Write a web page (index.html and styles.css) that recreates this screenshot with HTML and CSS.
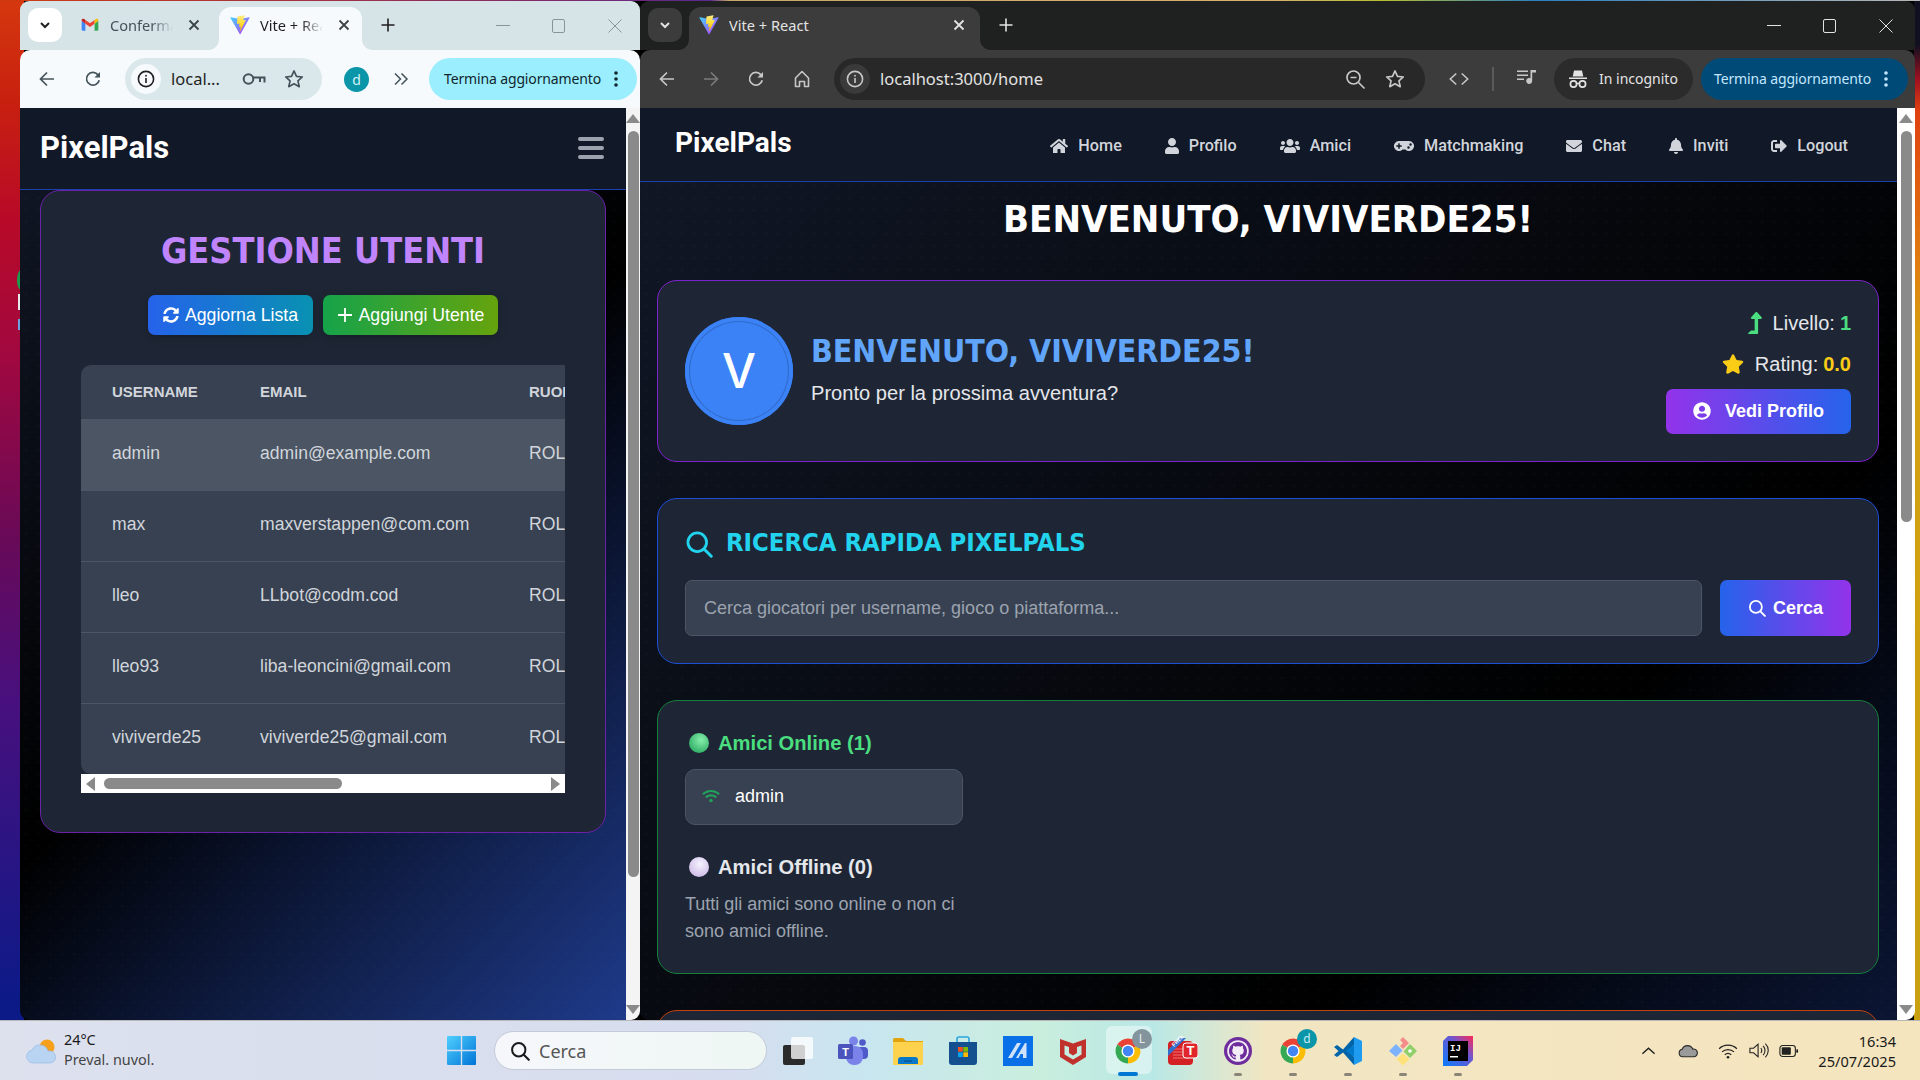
FILE: index.html
```html
<!DOCTYPE html>
<html lang="it">
<head>
<meta charset="utf-8">
<title>PixelPals</title>
<link rel="stylesheet" href="styles.css">
</head>
<body>
<svg class="sprite" aria-hidden="true">
  <defs>
    <linearGradient id="viteA" x1="0" y1="0" x2="1" y2="1"><stop offset="0" stop-color="#41d1ff"/><stop offset="1" stop-color="#bd34fe"/></linearGradient>
    <linearGradient id="viteB" x1="0" y1="0" x2="0" y2="1"><stop offset="0" stop-color="#ffea83"/><stop offset=".5" stop-color="#ffdd35"/><stop offset="1" stop-color="#ffa800"/></linearGradient>
    <linearGradient id="winG" x1="0" y1="0" x2="1" y2="1"><stop offset="0" stop-color="#4fd0ff"/><stop offset="1" stop-color="#0073d6"/></linearGradient>
    <linearGradient id="ijG" x1="0" y1="1" x2="1" y2="0"><stop offset="0" stop-color="#087cfa"/><stop offset=".6" stop-color="#6b57d2"/><stop offset="1" stop-color="#fe2857"/></linearGradient>
    <symbol id="vite" viewBox="0 0 410 404"><path fill="url(#viteA)" d="M399.641 59.5246L215.643 388.545C211.844 395.338 202.084 395.378 198.228 388.618L10.5817 59.5563C6.38087 52.1896 12.6802 43.2665 21.0281 44.7586L205.223 77.6824C206.398 77.8924 207.601 77.8904 208.776 77.6763L389.119 44.8058C397.439 43.2894 403.768 52.1434 399.641 59.5246Z"/><path fill="url(#viteB)" d="M292.965 1.5744L156.801 28.2552C154.563 28.6937 152.906 30.5903 152.771 32.8664L144.395 174.33C144.198 177.662 147.258 180.248 150.51 179.498L188.42 170.749C191.967 169.931 195.172 173.055 194.443 176.622L183.18 231.775C182.422 235.487 185.907 238.661 189.532 237.56L212.947 230.446C216.577 229.344 220.065 232.527 219.297 236.242L201.398 322.875C200.278 328.294 207.486 331.249 210.492 326.603L212.5 323.5L323.454 102.072C325.312 98.3645 322.108 94.137 318.036 94.9228L279.014 102.454C275.347 103.161 272.227 99.746 273.262 96.1583L298.731 7.86689C299.767 4.27314 296.636 0.855181 292.965 1.5744Z"/></symbol>
    <symbol id="chrome" viewBox="0 0 48 48"><path fill="#ea4335" d="M24 24L6.7 14A20 20 0 0 1 41.3 14Z"/><path fill="#fbbc04" d="M24 24L41.3 14A20 20 0 0 1 24 44Z"/><path fill="#34a853" d="M24 24L24 44A20 20 0 0 1 6.7 14Z"/><circle cx="24" cy="24" r="10.5" fill="#fff"/><circle cx="24" cy="24" r="8.3" fill="#4285f4"/></symbol>
    <symbol id="info" viewBox="0 0 20 20"><circle cx="10" cy="10" r="7.6" fill="none" stroke="currentColor" stroke-width="1.6"/><rect x="9.2" y="9" width="1.6" height="5" fill="currentColor"/><rect x="9.2" y="5.9" width="1.6" height="1.7" fill="currentColor"/></symbol>
    <symbol id="star-o" viewBox="0 0 24 24"><path fill="none" stroke="currentColor" stroke-width="1.8" stroke-linejoin="round" d="M12 3.2l2.7 5.9 6.4.7-4.8 4.3 1.4 6.3-5.7-3.2-5.7 3.2 1.4-6.3-4.8-4.3 6.4-.7z"/></symbol>
    <symbol id="back" viewBox="0 0 20 20"><path fill="none" stroke="currentColor" stroke-width="1.7" d="M17 10H4M10 3.5L3.5 10l6.5 6.5"/></symbol>
    <symbol id="fwd" viewBox="0 0 20 20"><path fill="none" stroke="currentColor" stroke-width="1.7" d="M3 10h13M10 3.5l6.5 6.5-6.5 6.5"/></symbol>
    <symbol id="reload" viewBox="0 0 20 20"><path fill="none" stroke="currentColor" stroke-width="1.7" d="M16.2 11.2A6.4 6.4 0 1 1 14.8 5.6L16.4 7.4"/><path fill="currentColor" d="M17 3v5.6h-5.6z"/></symbol>
    <symbol id="dots" viewBox="0 0 6 20"><circle cx="3" cy="4" r="1.8" fill="currentColor"/><circle cx="3" cy="10" r="1.8" fill="currentColor"/><circle cx="3" cy="16" r="1.8" fill="currentColor"/></symbol>
    <symbol id="x" viewBox="0 0 14 14"><path stroke="currentColor" stroke-width="1.8" d="M2.5 2.5l9 9M11.5 2.5l-9 9"/></symbol>
    <symbol id="plus" viewBox="0 0 16 16"><path stroke="currentColor" stroke-width="1.6" d="M8 1.5v13M1.5 8h13"/></symbol>
    <symbol id="chev" viewBox="0 0 14 14"><path fill="none" stroke="currentColor" stroke-width="2" d="M3 5l4 4 4-4"/></symbol>
    <symbol id="mag" viewBox="0 0 24 24"><circle cx="10.5" cy="10.5" r="8" fill="none" stroke="currentColor" stroke-width="2.4"/><path stroke="currentColor" stroke-width="2.6" stroke-linecap="round" d="M16.5 16.5l6 6"/></symbol>
    <symbol id="tr-wifi" viewBox="0 0 22 18"><path fill="none" stroke="currentColor" stroke-width="1.4" d="M1 6.500a14.500 14.500 0 0 1 20 0M4.200 10a10 10 0 0 1 13.600 0M7.400 13.300a5.400 5.400 0 0 1 7.200 0"/><circle cx="11" cy="16" r="1.500" fill="currentColor"/></symbol>
    <symbol id="fa-home" viewBox="0 0 576 512"><path fill="currentColor" d="M280.37 148.26L96 300.11V464a16 16 0 0 0 16 16l112.06-.29a16 16 0 0 0 15.92-16V368a16 16 0 0 1 16-16h64a16 16 0 0 1 16 16v95.64a16 16 0 0 0 16 16.05L464 480a16 16 0 0 0 16-16V300L295.67 148.26a12.19 12.19 0 0 0-15.3 0zM571.6 251.47L488 182.56V44.05a12 12 0 0 0-12-12h-56a12 12 0 0 0-12 12v72.61L318.47 43a48 48 0 0 0-61 0L4.34 251.47a12 12 0 0 0-1.6 16.9l25.5 31A12 12 0 0 0 45.15 301l235.22-193.74a12.19 12.19 0 0 1 15.3 0L530.9 301a12 12 0 0 0 16.9-1.6l25.5-31a12 12 0 0 0-1.7-16.93z"/></symbol>
    <symbol id="fa-user" viewBox="0 0 448 512"><path fill="currentColor" d="M224 256c70.7 0 128-57.3 128-128S294.7 0 224 0 96 57.3 96 128s57.3 128 128 128zm89.6 32h-16.7c-22.2 10.2-46.9 16-72.9 16s-50.6-5.8-72.9-16h-16.7C60.2 288 0 348.2 0 422.4V464c0 26.5 21.5 48 48 48h352c26.5 0 48-21.5 48-48v-41.6c0-74.2-60.2-134.4-134.4-134.4z"/></symbol>
    <symbol id="fa-users" viewBox="0 0 640 512"><path fill="currentColor" d="M96 224c35.3 0 64-28.7 64-64s-28.7-64-64-64-64 28.7-64 64 28.7 64 64 64zm448 0c35.3 0 64-28.7 64-64s-28.7-64-64-64-64 28.7-64 64 28.7 64 64 64zm32 32h-64c-17.6 0-33.5 7.1-45.1 18.6 40.3 22.1 68.9 62 75.1 109.4h66c17.7 0 32-14.3 32-32v-32c0-35.3-28.7-64-64-64zm-256 0c61.9 0 112-50.1 112-112S381.9 32 320 32 208 82.1 208 144s50.1 112 112 112zm76.8 32h-8.3c-20.8 10-43.9 16-68.5 16s-47.6-6-68.5-16h-8.3C179.6 288 128 339.6 128 403.2V432c0 26.5 21.5 48 48 48h288c26.5 0 48-21.5 48-48v-28.8c0-63.6-51.6-115.2-115.2-115.2zm-223.7-13.4C161.5 263.1 145.6 256 128 256H64c-35.3 0-64 28.7-64 64v32c0 17.7 14.3 32 32 32h65.9c6.3-47.4 34.9-87.3 75.2-109.4z"/></symbol>
    <symbol id="fa-game" viewBox="0 0 640 512"><path fill="currentColor" d="M480.07 96H160a160 160 0 1 0 114.24 272h91.52A160 160 0 1 0 480.07 96zM248 268a12 12 0 0 1-12 12h-52v52a12 12 0 0 1-12 12h-24a12 12 0 0 1-12-12v-52H84a12 12 0 0 1-12-12v-24a12 12 0 0 1 12-12h52v-52a12 12 0 0 1 12-12h24a12 12 0 0 1 12 12v52h52a12 12 0 0 1 12 12zm216 76a40 40 0 1 1 40-40 40 40 0 0 1-40 40zm64-96a40 40 0 1 1 40-40 40 40 0 0 1-40 40z"/></symbol>
    <symbol id="fa-mail" viewBox="0 0 512 512"><path fill="currentColor" d="M502.3 190.8c3.9-3.1 9.7-.2 9.7 4.7V400c0 26.5-21.5 48-48 48H48c-26.5 0-48-21.5-48-48V195.6c0-5 5.7-7.8 9.7-4.7 22.4 17.4 52.1 39.5 154.1 113.6 21.1 15.4 56.7 47.8 92.2 47.6 35.7.3 72-32.8 92.3-47.6 102-74.1 131.6-96.3 154-113.7zM256 320c23.2.4 56.6-29.2 73.4-41.4 132.7-96.3 142.8-104.7 173.4-128.7 5.8-4.5 9.2-11.5 9.2-18.9v-19c0-26.5-21.5-48-48-48H48C21.5 64 0 85.5 0 112v19c0 7.4 3.4 14.3 9.2 18.9 30.6 23.9 40.7 32.4 173.4 128.7 16.8 12.2 50.2 41.8 73.4 41.4z"/></symbol>
    <symbol id="fa-bell" viewBox="0 0 448 512"><path fill="currentColor" d="M224 512c35.32 0 63.97-28.65 63.97-64H160.03c0 35.35 28.65 64 63.97 64zm215.39-149.71c-19.32-20.76-55.47-51.99-55.47-154.29 0-77.7-54.48-139.9-127.94-155.16V32c0-17.67-14.32-32-31.98-32s-31.98 14.33-31.98 32v20.84C118.56 68.1 64.08 130.3 64.08 208c0 102.3-36.15 133.53-55.47 154.29-6 6.45-8.66 14.16-8.61 21.71.11 16.4 12.98 32 32.1 32h383.8c19.12 0 32-15.6 32.1-32 .05-7.55-2.61-15.27-8.61-21.71z"/></symbol>
    <symbol id="fa-out" viewBox="0 0 512 512"><path fill="currentColor" d="M497 273L329 441c-15 15-41 4.5-41-17v-96H152c-13.3 0-24-10.7-24-24v-96c0-13.3 10.7-24 24-24h136V88c0-21.4 25.9-32 41-17l168 168c9.3 9.4 9.3 24.6 0 34zM192 436v-40c0-6.6-5.4-12-12-12H96c-17.7 0-32-14.3-32-32V160c0-17.7 14.3-32 32-32h84c6.6 0 12-5.4 12-12V76c0-6.6-5.4-12-12-12H96c-53 0-96 43-96 96v192c0 53 43 96 96 96h84c6.6 0 12-5.4 12-12z"/></symbol>
    <symbol id="fa-sync" viewBox="0 0 512 512"><path fill="currentColor" d="M370.72 133.28C339.458 104.008 298.888 87.962 255.848 88c-77.458.068-144.328 53.178-162.791 126.85-1.344 5.363-6.122 9.15-11.651 9.15H24.103c-7.498 0-13.194-6.807-11.807-14.176C33.933 94.924 134.813 8 256 8c66.448 0 126.791 26.136 171.315 68.685L463.03 40.97C478.149 25.851 504 36.559 504 57.941V192c0 13.255-10.745 24-24 24H345.941c-21.382 0-32.09-25.851-16.971-40.971l41.75-41.749zM32 296h134.059c21.382 0 32.09 25.851 16.971 40.971l-41.75 41.75c31.262 29.273 71.835 45.319 114.876 45.28 77.418-.07 144.315-53.144 162.787-126.849 1.344-5.363 6.122-9.15 11.651-9.15h57.304c7.498 0 13.194 6.807 11.807 14.176C478.067 417.076 377.187 504 256 504c-66.448 0-126.791-26.136-171.315-68.685L48.97 471.03C33.851 486.149 8 475.441 8 454.059V320c0-13.255 10.745-24 24-24z"/></symbol>
    <symbol id="fa-ucircle" viewBox="0 0 496 512"><path fill="currentColor" d="M248 8C111 8 0 119 0 256s111 248 248 248 248-111 248-248S385 8 248 8zm0 96c48.6 0 88 39.4 88 88s-39.4 88-88 88-88-39.4-88-88 39.4-88 88-88zm0 344c-58.7 0-111.3-26.6-146.5-68.2 18.8-35.4 55.6-59.8 98.5-59.8 2.4 0 4.8.4 7.1 1.1 13 4.2 26.6 6.9 40.9 6.9 14.3 0 28-2.7 40.9-6.9 2.3-.7 4.7-1.1 7.1-1.1 42.9 0 79.7 24.4 98.5 59.8C359.3 421.4 306.7 448 248 448z"/></symbol>
    <symbol id="fa-star" viewBox="0 0 576 512"><path fill="currentColor" d="M259.3 17.8L194 150.2 47.9 171.5c-26.2 3.8-36.7 36.1-17.7 54.6l105.7 103-25 145.5c-4.5 26.3 23.2 46 46.4 33.7L288 439.6l130.7 68.7c23.2 12.2 50.9-7.4 46.4-33.7l-25-145.5 105.7-103c19-18.5 8.5-50.8-17.7-54.6L382 150.2 316.7 17.8c-11.7-23.6-45.6-23.9-57.4 0z"/></symbol>
    <symbol id="fa-level" viewBox="0 0 320 512"><path fill="currentColor" d="M313.553 119.669L209.587 7.666c-9.485-10.214-25.676-10.229-35.174 0L70.438 119.669C56.232 134.969 67.062 160 88.025 160H152v272H68.024a11.996 11.996 0 0 0-8.485 3.515l-56 56C-4.021 499.074 1.333 512 12.024 512H208c13.255 0 24-10.745 24-24V160h63.966c20.878 0 31.851-24.969 17.587-40.331z"/></symbol>
    <symbol id="fa-wifi" viewBox="0 0 640 512"><path fill="currentColor" d="M634.91 154.88C457.74-8.99 182.19-8.93 5.09 154.88c-6.66 6.16-6.79 16.59-.35 22.98l34.24 33.97c6.14 6.1 16.02 6.23 22.4.38 145.92-133.68 371.3-133.71 517.25 0 6.38 5.85 16.26 5.71 22.4-.38l34.24-33.97c6.43-6.39 6.3-16.82-.36-22.98zM320 352c-35.35 0-64 28.65-64 64s28.65 64 64 64 64-28.65 64-64-28.65-64-64-64zm202.67-83.59c-115.26-101.93-290.21-101.82-405.34 0-6.9 6.1-7.12 16.69-.57 23.15l34.44 33.99c6 5.92 15.66 6.32 22.05.8 83.95-72.57 209.74-72.41 293.49 0 6.39 5.52 16.05 5.13 22.05-.8l34.44-33.99c6.56-6.46 6.33-17.06-.56-23.15z"/></symbol>
  </defs>
</svg>

<div class="desktop">
  <i class="peek peek-green"></i><i class="peek peek-white"></i><i class="peek peek-blue"></i>

  <!-- Finestra sinistra -->
  <section class="win win-left light">
    <div class="strip">
      <button class="tab-menu"><svg class="i14"><use href="#chev"/></svg></button>
      <div class="tab tab-a">
        <svg class="favicon" viewBox="0 0 48 48"><path fill="#4285f4" d="M4 14v21a3 3 0 0 0 3 3h6V21z"/><path fill="#34a853" d="M44 14v21a3 3 0 0 1-3 3h-6V21z"/><path fill="#ea4335" d="M13 21l11 8 11-8v-9l-11 8-11-8z"/><path fill="#c5221f" d="M4 11.5V14l9 7v-9l-3-2.3A3.8 3.8 0 0 0 4 11.5z"/><path fill="#fbbc04" d="M35 12v9l9-7v-2.500A3.800 3.800 0 0 0 38 9.700z"/></svg>
        <span class="tab-title">Conferma</span>
        <svg class="tab-x"><use href="#x"/></svg>
      </div>
      <div class="tab tab-b active">
        <svg class="favicon"><use href="#vite"/></svg>
        <span class="tab-title">Vite + React</span>
        <svg class="tab-x"><use href="#x"/></svg>
      </div>
      <svg class="newtab"><use href="#plus"/></svg>
      <div class="ctls ctls-dim">
        <span class="ctl"><i class="c-min"></i></span><span class="ctl"><i class="c-max"></i></span><span class="ctl"><svg class="c-x" viewBox="0 0 14 14"><path stroke="currentColor" stroke-width="1" d="M.5.5l13 13M13.500.5l-13 13"/></svg></span>
      </div>
    </div>
    <div class="toolbar">
      <span class="tb m9"><svg class="i20"><use href="#back"/></svg></span>
      <span class="tb m10"><svg class="i20"><use href="#reload"/></svg></span>
      <div class="omni omni-l m14">
        <span class="omni-info"><svg class="i20"><use href="#info"/></svg></span>
        <span class="omni-text">local...</span>
        <span class="omni-end">
          <svg class="key" viewBox="0 0 24 14"><circle cx="6.500" cy="7" r="4.800" fill="none" stroke="currentColor" stroke-width="2"/><path fill="none" stroke="currentColor" stroke-width="2" d="M11 5.500h11.500v5M18 6v4"/></svg>
          <svg class="i22 star-l"><use href="#star-o"/></svg>
        </span>
      </div>
      <span class="profile">d</span>
      <svg class="more" viewBox="0 0 16 14"><path fill="none" stroke="currentColor" stroke-width="1.500" d="M2 1.500L7.500 7 2 12.500M8.500 1.500L14 7l-5.500 5.500"/></svg>
      <div class="pill-update pill-l"><span>Termina aggiornamento</span><svg class="i-dots"><use href="#dots"/></svg></div>
    </div>
    <div class="view">
      <div class="page page-l">
        <header class="nav nav-l">
          <span class="brand brand-l">PixelPals</span>
          <span class="burger"><i></i><i></i><i></i></span>
        </header>
        <main class="main-l">
          <div class="card card-admin">
            <h1 class="admin-title">GESTIONE UTENTI</h1>
            <div class="admin-btns">
              <button class="btn btn-blue"><svg class="i16"><use href="#fa-sync"/></svg>Aggiorna Lista</button>
              <button class="btn btn-green"><svg class="i14-5" viewBox="0 0 16 16"><path stroke="currentColor" stroke-width="1.800" d="M8 1v14M1 8h14"/></svg>Aggiungi Utente</button>
            </div>
            <div class="table-clip">
              <table class="users">
                <thead><tr><th>USERNAME</th><th>EMAIL</th><th>RUOLO</th></tr></thead>
                <tbody>
                  <tr class="hover"><td>admin</td><td>admin@example.com</td><td>ROLE_ADMIN</td></tr>
                  <tr><td>max</td><td>maxverstappen@com.com</td><td>ROLE_USER</td></tr>
                  <tr><td>lleo</td><td>LLbot@codm.cod</td><td>ROLE_USER</td></tr>
                  <tr><td>lleo93</td><td>liba-leoncini@gmail.com</td><td>ROLE_USER</td></tr>
                  <tr><td>viviverde25</td><td>viviverde25@gmail.com</td><td>ROLE_USER</td></tr>
                </tbody>
              </table>
            </div>
            <div class="hscroll"><i class="arr arr-l"></i><i class="hthumb"></i><i class="arr arr-r"></i></div>
          </div>
        </main>
      </div>
      <div class="vscroll vscroll-l"><i class="arr arr-u"></i><i class="vthumb thumb-l"></i><i class="arr arr-d"></i></div>
    </div>
  </section>

  <!-- Finestra destra -->
  <section class="win win-right dark">
    <div class="strip">
      <button class="tab-menu"><svg class="i14"><use href="#chev"/></svg></button>
      <div class="tab tab-c active">
        <svg class="favicon"><use href="#vite"/></svg>
        <span class="tab-title tab-title-full">Vite + React</span>
        <svg class="tab-x"><use href="#x"/></svg>
      </div>
      <svg class="newtab"><use href="#plus"/></svg>
      <div class="ctls">
        <span class="ctl"><i class="c-min"></i></span><span class="ctl"><i class="c-max"></i></span><span class="ctl"><svg class="c-x" viewBox="0 0 14 14"><path stroke="currentColor" stroke-width="1" d="M.5.5l13 13M13.500.5l-13 13"/></svg></span>
      </div>
    </div>
    <div class="toolbar">
      <span class="tb m9"><svg class="i20"><use href="#back"/></svg></span>
      <span class="tb m8 tb-off"><svg class="i20"><use href="#fwd"/></svg></span>
      <span class="tb m9"><svg class="i20"><use href="#reload"/></svg></span>
      <span class="tb m10"><svg class="i20" viewBox="0 0 20 20"><path fill="none" stroke="currentColor" stroke-width="1.600" stroke-linejoin="round" d="M3.500 9L10 2.500 16.500 9v8.500h-4v-5h-5v5h-4z"/></svg></span>
      <div class="omni omni-r m14">
        <span class="omni-info"><svg class="i20"><use href="#info"/></svg></span>
        <span class="omni-text">localhost:3000/home</span>
        <span class="omni-end">
          <svg class="i22 zoom-i" viewBox="0 0 22 22"><circle cx="9.500" cy="9.500" r="6.500" fill="none" stroke="currentColor" stroke-width="1.700"/><path stroke="currentColor" stroke-width="1.700" d="M14.500 14.500l6 6M6.500 9.500h6"/></svg>
          <svg class="i22 star-r"><use href="#star-o"/></svg>
        </span>
      </div>
      <svg class="code" viewBox="0 0 24 16"><path fill="none" stroke="currentColor" stroke-width="1.700" d="M9 2L2.500 8 9 14M15 2l6.500 6-6.500 6"/></svg>
      <i class="tb-sep"></i>
      <svg class="media" viewBox="0 0 20 16"><path fill="currentColor" d="M0 1.500h11V3H0zM0 5.500h11V7H0zM0 9.500h7V11H0z"/><path fill="currentColor" d="M13.500 1H19v2.500h-3.800V12a3 3 0 1 1-1.700-2.700z"/></svg>
      <div class="pill-incog">
        <svg class="hat" viewBox="0 0 20 20"><path fill="currentColor" d="M6 1.500h8l1.300 6H4.700zM1 8.500h18V10H1z"/><circle cx="5.500" cy="15" r="3.100" fill="none" stroke="currentColor" stroke-width="1.700"/><circle cx="14.500" cy="15" r="3.100" fill="none" stroke="currentColor" stroke-width="1.700"/><path stroke="currentColor" stroke-width="1.500" d="M8.500 14.500h3"/></svg>
        <span>In incognito</span>
      </div>
      <div class="pill-update pill-r"><span>Termina aggiornamento</span><svg class="i-dots"><use href="#dots"/></svg></div>
    </div>
    <div class="view">
      <div class="page page-r">
        <header class="nav nav-r">
          <span class="brand brand-r">PixelPals</span>
          <nav class="links">
            <a><svg class="ni ni-home"><use href="#fa-home"/></svg>Home</a>
            <a><svg class="ni ni-user"><use href="#fa-user"/></svg>Profilo</a>
            <a><svg class="ni ni-users"><use href="#fa-users"/></svg>Amici</a>
            <a><svg class="ni ni-users"><use href="#fa-game"/></svg>Matchmaking</a>
            <a><svg class="ni ni-mail"><use href="#fa-mail"/></svg>Chat</a>
            <a><svg class="ni ni-bell"><use href="#fa-bell"/></svg>Inviti</a>
            <a><svg class="ni ni-mail"><use href="#fa-out"/></svg>Logout</a>
          </nav>
        </header>
        <main class="main-r">
          <h1 class="hello">BENVENUTO, VIVIVERDE25!</h1>
          <div class="stack">
            <div class="card card-welcome">
              <div class="avatar">V</div>
              <div class="welcome-text">
                <h2 class="welcome-title">BENVENUTO, VIVIVERDE25!</h2>
                <p class="welcome-sub">Pronto per la prossima avventura?</p>
              </div>
              <div class="stats">
                <div class="stat"><svg class="st-i st-level"><use href="#fa-level"/></svg>Livello:<b class="v-green">1</b></div>
                <div class="stat"><svg class="st-i st-star"><use href="#fa-star"/></svg>Rating:<b class="v-gold">0.0</b></div>
                <button class="btn-profile"><svg class="i18"><use href="#fa-ucircle"/></svg>Vedi Profilo</button>
              </div>
            </div>
            <div class="card card-search">
              <h2 class="search-title"><svg class="mag-big"><use href="#mag"/></svg>RICERCA RAPIDA PIXELPALS</h2>
              <div class="search-row">
                <div class="search-input">Cerca giocatori per username, gioco o piattaforma...</div>
                <button class="btn-search"><svg class="i18"><use href="#mag"/></svg>Cerca</button>
              </div>
            </div>
            <div class="card card-friends">
              <div class="friends-col">
                <h3 class="fr-head fr-on"><i class="dot dot-on"></i>Amici Online (1)</h3>
                <div class="friend"><svg class="wifi"><use href="#fa-wifi"/></svg>admin</div>
                <h3 class="fr-head fr-off"><i class="dot dot-off"></i>Amici Offline (0)</h3>
                <p class="fr-note">Tutti gli amici sono online o non ci sono amici offline.</p>
              </div>
            </div>
            <div class="card card-next"></div>
          </div>
        </main>
      </div>
      <div class="vscroll vscroll-r"><i class="arr arr-u"></i><i class="vthumb thumb-r"></i><i class="arr arr-d"></i></div>
    </div>
  </section>
</div>

<footer class="taskbar">
  <div class="weather">
    <svg class="w-ico" viewBox="0 0 32 26"><circle cx="22" cy="9" r="7.500" fill="#f7a01c"/><path fill="#b8d4f2" stroke="#8fb5e0" stroke-width=".6" d="M8 25a6.500 6.500 0 0 1-1-12.900A8.500 8.500 0 0 1 23 13a5.500 5.500 0 0 1 3 12z"/></svg>
    <div class="w-text"><span>24°C</span><small>Preval. nuvol.</small></div>
  </div>
  <svg class="winlogo" viewBox="0 0 30 30"><path fill="url(#winG)" d="M0 1a1 1 0 0 1 1-1h13.300v14.300H0zM15.700 0H29a1 1 0 0 1 1 1v13.300H15.700zM0 15.700h14.300V30H1a1 1 0 0 1-1-1zM15.700 15.700H30V29a1 1 0 0 1-1 1H15.700z"/></svg>
  <div class="tsearch"><svg class="tsearch-i"><use href="#mag"/></svg><span>Cerca</span></div>
  <div class="apps">
    <span class="app"><svg class="ai" viewBox="0 0 30 30"><rect x="0" y="9" width="22" height="20" rx="2" fill="#2b2b2b"/><rect x="8" y="1" width="22" height="22" rx="2" fill="#fff" opacity=".78"/></svg></span>
    <span class="app"><svg class="ai" viewBox="0 0 30 30"><circle cx="24.500" cy="6.500" r="3.300" fill="#5059c9"/><circle cx="15.500" cy="5" r="4.500" fill="#7b83eb"/><rect x="19" y="11" width="11" height="12" rx="4" fill="#5059c9"/><rect x="8" y="10" width="17" height="19" rx="8" fill="#7b83eb"/><rect y="8" width="15" height="15" rx="1.500" fill="#4b53bc"/><text x="7.500" y="19.500" class="ai-t">T</text></svg></span>
    <span class="app"><svg class="ai" viewBox="0 0 30 30"><path fill="#e2a40e" d="M0 3.500A1.500 1.500 0 0 1 1.500 2h8.500l3 3h17v6H0z"/><path fill="#ffd24d" d="M0 6h30v22a1 1 0 0 1-1 1H1a1 1 0 0 1-1-1z"/><path fill="#0a78c8" d="M5 28v-4a3 3 0 0 1 3-3h14a3 3 0 0 1 3 3v4z"/><rect x="11" y="24.500" width="8" height="1.200" fill="#084f8a"/></svg></span>
    <span class="app"><svg class="ai" viewBox="0 0 30 30"><path fill="none" stroke="#2aa6e0" stroke-width="1.600" d="M9 6V3a2 2 0 0 1 2-2h8a2 2 0 0 1 2 2v3"/><path fill="#14508f" d="M1 6h28v20a3 3 0 0 1-3 3H4a3 3 0 0 1-3-3z"/><path fill="#f25022" d="M10 11h4.700v4.700H10z"/><path fill="#7fba00" d="M15.300 11H20v4.700h-4.700z"/><path fill="#00a4ef" d="M10 16.300h4.700V21H10z"/><path fill="#ffb900" d="M15.300 16.300H20V21h-4.700z"/></svg></span>
    <span class="app"><svg class="ai" viewBox="0 0 30 30"><rect width="30" height="30" fill="#0a70e8"/><path fill="#cfe3fb" d="M5 22L14 7h4L9 22zM13 22l9-15h1.500v15h-3.500v-4h-2.500L15.500 22z"/></svg></span>
    <span class="app"><svg class="ai" viewBox="0 0 30 30"><path fill="#c0302c" d="M2 3l13 4.500L28 3v18l-13 8-13-8zM6.500 9.500v9L15 23.500l8.500-5v-9L19 11v6l-4 2.500L11 17v-6z"/></svg></span>
    <span class="app app-active">
      <svg class="ai"><use href="#chrome"/></svg>
      <b class="badge badge-l">L</b>
    </span>
    <span class="app"><svg class="ai" viewBox="0 0 30 30"><rect y="5" width="25" height="24" rx="4" fill="#d42025"/><path stroke="#f07070" stroke-width="1" d="M5 13h16M5 16h16M5 19h16M5 22h16"/><path fill="#2e6fd0" d="M0 14L12 2h6L0 20z"/><text x="6" y="11" class="ai-free" transform="rotate(-45 6 11)">FREE</text><rect x="15" y="7" width="15" height="15" rx="3" fill="#e0262a" stroke="#fff"/><text x="22.500" y="19" class="ai-tt">T</text></svg></span>
    <span class="app app-run"><svg class="ai" viewBox="0 0 30 30"><circle cx="15" cy="15" r="14" fill="#6e2d9c"/><circle cx="15" cy="15" r="10.800" fill="#f3edf7"/><svg x="6" y="6" width="18" height="18" viewBox="0 0 16 16"><path fill="#6e2d9c" d="M8 0C3.580 0 0 3.580 0 8c0 3.540 2.290 6.530 5.470 7.590.4.070.55-.17.55-.38 0-.19-.01-.82-.01-1.490-2.010.37-2.530-.49-2.690-.94-.09-.23-.48-.94-.82-1.130-.28-.15-.68-.52-.01-.53.63-.01 1.080.58 1.230.82.720 1.210 1.870.87 2.330.66.070-.52.280-.87.510-1.070-1.780-.2-3.640-.89-3.640-3.950 0-.87.310-1.590.820-2.150-.08-.2-.36-1.020.080-2.120 0 0 .67-.21 2.200.82.640-.18 1.320-.27 2-.27.680 0 1.360.09 2 .27 1.530-1.040 2.200-.82 2.200-.82.440 1.100.160 1.920.080 2.120.510.560.820 1.270.820 2.150 0 3.070-1.870 3.750-3.650 3.950.290.25.540.730.540 1.480 0 1.070-.01 1.930-.01 2.200 0 .21.150.46.550.38A8.013 8.013 0 0016 8c0-4.420-3.580-8-8-8z"/></svg></svg></span>
    <span class="app app-run">
      <svg class="ai"><use href="#chrome"/></svg>
      <b class="badge badge-d">d</b>
    </span>
    <span class="app app-run"><svg class="ai" viewBox="0 0 30 30"><path fill="#0065a9" d="M1 11l3-2 6 4.500L21 1v8l-6 6 6 6v8L10 16.500 4 21l-3-2 4.500-4z"/><path fill="#1f9cf0" d="M21 1l8 4v20l-8 4z"/><path fill="#007acc" d="M21 9l-8 6 8 6z"/></svg></span>
    <span class="app app-run"><svg class="ai" viewBox="0 0 30 30"><path fill="#f48c8c" d="M15 1l6 6-6 6-3-3 3-3-3-3z"/><path fill="#7db2ff" d="M8 8l6.500 6.500L8 21 1 15z"/><path fill="#8fd06a" d="M22 8l7 7-7 7-6.500-6.500z"/><path fill="#ffe17a" d="M15 17.500l6.500 5.500-6.500 6.500L8.500 23z"/><circle cx="22" cy="15" r="1.800" fill="#fff"/></svg></span>
    <span class="app app-run"><svg class="ai" viewBox="0 0 30 30"><path fill="url(#ijG)" d="M5 0h25v24l-6 6H0V5z"/><rect x="5" y="5" width="20" height="20" fill="#000"/><text x="7" y="15" class="ai-ij">IJ</text><rect x="7" y="20" width="8" height="1.500" fill="#fff"/></svg></span>
  </div>
  <div class="tray">
    <svg class="tr tr-chev" viewBox="0 0 16 10"><path fill="none" stroke="currentColor" stroke-width="1.500" d="M1.500 8L8 2l6.500 6"/></svg>
    <svg class="tr tr-cloud" viewBox="0 0 22 14"><path fill="#9a9a9a" stroke="#2a2a2a" stroke-width="1.200" d="M5 13a4 4 0 0 1-.6-7.900A6 6 0 0 1 15.500 5 4 4 0 0 1 17 13z"/></svg>
    <svg class="tr tr-wifi"><use href="#tr-wifi"/></svg>
    <svg class="tr tr-vol" viewBox="0 0 22 18"><path fill="none" stroke="currentColor" stroke-width="1.200" d="M1 6.500h4L10 2v14l-5-4.500H1zM13 6.500a3.500 3.500 0 0 1 0 5M15.500 4a7 7 0 0 1 0 10M18 1.500a10.500 10.500 0 0 1 0 15"/></svg>
    <svg class="tr tr-bat" viewBox="0 0 22 14"><rect x="1" y="1" width="17" height="12" rx="3" fill="none" stroke="currentColor" stroke-width="1.200"/><rect x="3" y="3" width="10" height="8" rx="1" fill="currentColor"/><rect x="19" y="5" width="2" height="4" rx="1" fill="currentColor"/></svg>
    <div class="clock"><span>16:34</span><span>25/07/2025</span></div>
  </div>
</footer>
</body>
</html>
```

FILE: styles.css
```css
* { box-sizing: border-box; margin: 0; padding: 0; }
html, body { width: 1920px; height: 1080px; overflow: hidden; }
body { font-family: "Liberation Sans", Arial, sans-serif; background: #000; }
button { border: 0; font: inherit; }
.sprite { position: absolute; width: 0; height: 0; }

/* ---------- desktop ---------- */
.desktop {
  position: relative; height: 1020px; overflow: hidden;
  background:
    linear-gradient(90deg, #d03a10 0, #7a2a70 30%, #5a2a90 37%, #c8a868 38%, #d8b070 66%, #b8c030 72%, #2a80c0 80%, #b8b8b8 100%) top left / 100% 1px no-repeat,
    linear-gradient(180deg, #101020 45px, #a01020 80px, #e04010 110px, #e08010 270px, #d4a010 340px, #c8a010 100%) right top / 6px 100% no-repeat,
    linear-gradient(180deg, #d5380f 0, #c8200f 100px, #b80a28 220px, #a00840 360px, #680a58 540px, #48107e 700px, #0c1a88 1000px) left top / 24px 100% no-repeat,
    #000;
}
.peek { position: absolute; display: block; }
.peek-green { left: 17px; top: 270px; width: 8px; height: 20px; border-radius: 50%; background: #1f9a4a; }
.peek-white { left: 18px; top: 294px; width: 6px; height: 16px; background: #e8e8e8; }
.peek-blue { left: 18px; top: 319px; width: 6px; height: 11px; background: #6aa0e0; }

.win { position: absolute; top: 1px; height: 1019px; display: flex; flex-direction: column; overflow: hidden; border-radius: 9px; }
.win-left { left: 20px; width: 620px; }
.win-right { left: 640px; width: 1275px; }
.light { --strip: #d6e3e7; --bar: #f6fafd; --fg: #44525a; --ink: #1f1f1f; --omni: #dae7eb; --tab-x: #3a4448; }
.dark { --strip: #1f2120; --bar: #3c3c3c; --fg: #c7c7c7; --ink: #e3e3e3; --omni: #282828; --tab-x: #e3e3e3; }

/* ---------- chrome ---------- */
.strip { height: 49px; flex: none; display: flex; align-items: flex-end; background: var(--strip); color: var(--fg); }
.tab-menu { width: 34px; height: 34px; margin: 0 0 8px 8px; border-radius: 10px; display: flex; align-items: center; justify-content: center; color: var(--ink); background: var(--bar); }
.light .tab-menu { background: #fff; }
.tab { position: relative; height: 43px; display: flex; align-items: center; flex: none; padding-bottom: 7px; border-radius: 12px 12px 0 0; }
.tab-a { width: 157px; padding-left: 18px; }
.tab-b { width: 143px; padding-left: 11px; }
.tab-c { width: 291px; margin-left: 7px; padding-left: 10px; }
.active { background: var(--bar); color: var(--ink); }
.active::before, .active::after { content: ""; position: absolute; bottom: 0; width: 10px; height: 10px; }
.active::before { left: -10px; background: radial-gradient(circle at 0 0, transparent 9.5px, var(--bar) 10px); }
.active::after { right: -10px; background: radial-gradient(circle at 100% 0, transparent 9.5px, var(--bar) 10px); }
.favicon { width: 20px; height: 20px; flex: none; }
.tab-title { font: 14.6px/20px "Noto Sans", sans-serif; margin-left: 10px; white-space: nowrap; overflow: hidden; width: 63px; flex: none; -webkit-mask-image: linear-gradient(90deg, #000 65%, transparent); mask-image: linear-gradient(90deg, #000 65%, transparent); }
.tab-title-full { width: auto; flex: 1; -webkit-mask-image: none; mask-image: none; }
.tab-x { width: 14px; height: 14px; margin-left: 14px; flex: none; color: var(--tab-x); }
.tab-c .tab-x { margin: 0 14px 0 0; }
.newtab { width: 16px; height: 16px; margin: 0 0 17px 18px; color: var(--ink); flex: none; }
.ctls { margin-left: auto; margin-right: 1px; display: flex; align-self: stretch; color: #e3e3e3; }
.ctls-dim { color: #8a9498; margin-right: -3px; }
.ctl { width: 56px; height: 49px; display: flex; align-items: center; justify-content: center; }
.c-min { width: 14px; height: 1px; background: currentColor; }
.c-max { width: 13px; height: 14px; margin-right: 2px; border: 1px solid currentColor; border-radius: 2px; }
.c-x { width: 14px; height: 14px; }

.toolbar { height: 58px; flex: none; display: flex; align-items: center; background: var(--bar); color: var(--fg); border-radius: 10px 10px 0 0; }
.tb { width: 36px; height: 36px; display: flex; align-items: center; justify-content: center; flex: none; }
.tb-off { opacity: .45; }
.m8 { margin-left: 8px; } .m9 { margin-left: 9px; } .m10 { margin-left: 10px; } .m14 { margin-left: 14px; }
.i14 { width: 14px; height: 14px; } .i16 { width: 16px; height: 16px; } .i18 { width: 18px; height: 18px; } .i20 { width: 20px; height: 20px; } .i22 { width: 22px; height: 22px; }
.omni { height: 42px; border-radius: 21px; background: var(--omni); display: flex; align-items: center; flex: none; padding-left: 6px; }
.omni-l { width: 197px; }
.omni-r { width: 591px; }
.omni-info { width: 30px; height: 30px; border-radius: 50%; background: var(--bar); display: flex; align-items: center; justify-content: center; color: var(--ink); flex: none; }
.dark .omni-info { background: #3a3a3a; color: #c7c7c7; }
.omni-text { font: 16.5px/24px "Noto Sans", sans-serif; color: var(--ink); margin-left: 10px; white-space: nowrap; }
.omni-end { margin-left: auto; display: flex; align-items: center; color: var(--fg); }
.key { width: 24px; height: 14px; }
.star-l { margin: 0 17px 0 17px; }
.zoom-i { margin-right: 18px; }
.star-r { margin-right: 19px; }
.profile { width: 25px; height: 25px; margin-left: 22px; border-radius: 50%; background: #0b95a8; color: #d4f3f7; font: 14px/25px "Noto Sans", sans-serif; text-align: center; flex: none; }
.more { width: 16px; height: 14px; margin-left: 24px; flex: none; }
.pill-update { height: 42px; border-radius: 21px; display: flex; align-items: center; flex: none; font: 14px/20px "Noto Sans", sans-serif; letter-spacing: -.14px; white-space: nowrap; }
.pill-l { width: 208px; background: #9beefd; color: #10262c; margin-left: 20px; padding-left: 15px; }
.pill-r { width: 207px; background: #004a77; color: #c2e7ff; margin-left: 8px; padding-left: 13px; }
.i-dots { width: 6px; height: 20px; margin-left: 12px; flex: none; }
.code { width: 22px; height: 16px; flex: none; margin-left: 23px; }
.tb-sep { width: 2px; height: 24px; background: #5a5a5a; margin-left: 22px; flex: none; }
.media { width: 20px; height: 16px; margin: 0 0 4px 23px; flex: none; }
.pill-incog { width: 139px; height: 42px; margin-left: 17px; border-radius: 21px; background: #2b2b2b; display: flex; align-items: center; padding-left: 14px; font: 14px/20px "Noto Sans", sans-serif; color: #e3e3e3; flex: none; white-space: nowrap; }
.hat { width: 20px; height: 20px; margin-right: 11px; flex: none; }

/* ---------- page ---------- */
.view { flex: 1; min-height: 0; display: flex; }
.page { flex: 1; min-width: 0; overflow: hidden; color: #e5e7eb; }
.page-l {
  background:
    radial-gradient(circle, rgba(255,255,255,.025) 1px, transparent 1.5px) 0 0 / 12px 12px,
    linear-gradient(135deg, #111827 0%, #000 50%, #1e3a8a 100%);
}
.page-r {
  background:
    radial-gradient(circle, rgba(255,255,255,.025) 1px, transparent 1.5px) 0 0 / 12px 12px,
    linear-gradient(135deg, #111827 0%, #000 50%, #1e3a8a 100%) 0 0 / 100% 1900px no-repeat;
}
.admin-title, .hello, .welcome-title, .search-title { font-family: "DejaVu Sans Condensed", "DejaVu Sans", sans-serif; }
.brand, .links a { font-family: Roboto, sans-serif; }
.nav { display: flex; align-items: center; background: #111827; border-bottom: 1px solid #1e40af; }
.nav-l { height: 82px; padding: 0 22px 2px 20px; justify-content: space-between; }
.nav-r { height: 74px; padding: 0 49px 0 35px; justify-content: space-between; }
.brand { font-weight: 700; color: #fff; }
.brand-l { font-size: 31px; line-height: 36px; }
.brand-r { font-size: 28px; line-height: 34px; margin-top: -4px; }
.burger { width: 26px; display: flex; flex-direction: column; gap: 5px; }
.burger i { height: 4px; border-radius: 2px; background: #9ca3af; }
.links { display: flex; gap: 43px; margin-top: 2px; }
.links a { display: flex; align-items: center; gap: 10px; font-size: 16.2px; font-weight: 500; color: #d1d5db; }
.ni { height: 16px; color: #d1d5db; flex: none; }
.ni-home { width: 18px; } .ni-user { width: 14px; } .ni-users { width: 20px; } .ni-mail { width: 16px; } .ni-bell { width: 14px; }

.card { background: #1e2635; border: 1px solid; border-radius: 20px; }
.main-l { padding: 0 20px; }
.card-admin { height: 643px; border-color: #6b21a8; padding: 41px 40px 0; }
.admin-title { font-size: 35.8px; line-height: 38px; font-weight: 700; color: #c084fc; text-align: center; }
.admin-btns { margin-top: 25px; display: flex; justify-content: center; gap: 10px; }
.btn { height: 40px; border-radius: 7px; color: #fff; font-size: 17.7px; display: flex; align-items: center; gap: 6px; justify-content: center; box-shadow: 0 2px 8px rgba(0,0,0,.25); }
.btn-blue { width: 165px; background: linear-gradient(90deg, #2563eb, #0891b2); }
.btn-green { width: 175px; background: linear-gradient(90deg, #16a34a, #65a30d); }
.i14-5 { width: 16px; height: 16px; }
.table-clip { margin-top: 30px; height: 409px; overflow: hidden; background: #374151; border-radius: 10px 0 0 10px; }
.users { border-collapse: collapse; table-layout: fixed; width: 640px; font-size: 17.6px; }
.users th { height: 54px; text-align: left; font-size: 15px; font-weight: 700; color: #d1d5db; white-space: nowrap; }
.users th:nth-child(1) { width: 179px; padding-left: 31px; }
.users th:nth-child(2) { width: 269px; }
.users td { height: 71px; padding: 0 0 2px; color: #d1d5db; white-space: nowrap; border-top: 1px solid #4b5563; }
.users td:first-child { padding-left: 31px; }
.users .hover td { background: #4b5563; }
.hscroll { height: 19px; background: #fff; display: flex; align-items: center; padding: 0 5px; }
.arr { display: block; width: 0; height: 0; flex: none; }
.arr-l { border: 6px solid transparent; border-left: 0; border-right: 9px solid #8a8a8a; border-top-width: 7px; border-bottom-width: 7px; }
.arr-r { margin-left: auto; border: 6px solid transparent; border-right: 0; border-left: 9px solid #8a8a8a; border-top-width: 7px; border-bottom-width: 7px; }
.hthumb { width: 238px; height: 11px; border-radius: 6px; background: #8a8a8a; margin-left: 9px; }

.vscroll { flex: none; background: #f4f4f4; display: flex; flex-direction: column; align-items: center; }
.vscroll-l { width: 14px; }
.vscroll-r { width: 18px; background: #fff; }
.arr-u { border: 7px solid transparent; border-top: 0; border-bottom: 9px solid #8a8a8a; margin-top: 6px; }
.arr-d { margin-top: auto; margin-bottom: 6px; border: 7px solid transparent; border-bottom: 0; border-top: 9px solid #8a8a8a; }
.vthumb { background: #8a8a8a; border-radius: 6px; margin-top: 8px; }
.thumb-l { width: 11px; height: 746px; }
.thumb-r { width: 11px; height: 391px; }

/* ---------- home ---------- */
.main-r { padding: 0 18px 0 17px; }
.hello { font-size: 38px; line-height: 48px; margin-top: 13px; font-weight: 700; color: #fff; text-align: center; }
.stack { margin-top: 37px; display: flex; flex-direction: column; gap: 36px; }
.card-welcome { height: 182px; border-color: #7e22ce; display: flex; align-items: center; padding: 0 27px; }
.avatar { width: 108px; height: 108px; flex: none; border-radius: 50%; background: #3b82f6; box-shadow: inset 0 0 0 4px #3b82f6, inset 0 0 0 5px rgba(30,64,120,.35); color: #fff; font: 500 48px/108px "Inter", sans-serif; text-align: center; }
.welcome-text { margin-left: 18px; flex: 1; padding-bottom: 6px; }
.welcome-title { font-size: 31.8px; line-height: 38px; font-weight: 700; color: #60a5fa; }
.welcome-sub { font-size: 20.1px; line-height: 24px; margin-top: 11px; color: #e5e7eb; }
.stats { display: flex; flex-direction: column; align-items: flex-end; padding-bottom: 6px; }
.stat { display: flex; align-items: center; font-size: 20px; line-height: 24px; height: 41px; color: #e5e7eb; }
.stat b { margin-left: 5px; font-weight: 700; }
.v-green { color: #4ade80; } .v-gold { color: #facc15; }
.st-i { flex: none; margin-right: 11px; }
.st-level { width: 14px; height: 22px; color: #4ade80; }
.st-star { width: 22px; height: 20px; color: #facc15; }
.btn-profile { width: 185px; height: 45px; margin-top: 4px; border-radius: 7px; color: #fff; font-weight: 700; font-size: 18px; display: flex; align-items: center; justify-content: center; gap: 14px; background: linear-gradient(90deg, #9333ea, #2563eb); }
.card-search { height: 166px; border-color: #1d4ed8; padding: 27px 27px 0; }
.search-title { display: flex; align-items: center; gap: 13px; height: 32px; font-size: 25.4px; font-weight: 700; color: #22d3ee; }
.mag-big { width: 28px; height: 28px; flex: none; margin-top: 4px; }
.search-row { display: flex; gap: 18px; margin-top: 22px; }
.search-input { flex: 1; height: 56px; border-radius: 7px; background: #374151; border: 1px solid #4b5563; color: #9ca3af; font-size: 18px; line-height: 54px; padding-left: 18px; }
.btn-search { width: 131px; height: 56px; border-radius: 7px; color: #fff; font-weight: 700; font-size: 18px; display: flex; align-items: center; justify-content: center; gap: 7px; background: linear-gradient(90deg, #2563eb, #9333ea); }
.card-friends { height: 274px; border-color: #15803d; padding: 28px 27px 0; }
.friends-col { width: 278px; }
.fr-head { display: flex; align-items: center; height: 28px; font-size: 20.2px; font-weight: 700; padding-left: 4px; }
.fr-on { color: #4ade80; }
.fr-off { color: #e5e7eb; margin-top: 28px; }
.dot { width: 20px; height: 20px; border-radius: 50%; margin-right: 9px; flex: none; }
.dot-on { background: radial-gradient(circle at 60% 35%, #86efac, #22a35a 90%); }
.dot-off { background: radial-gradient(circle at 55% 35%, #f5f3ff, #c9b4e4 90%); }
.friend { margin-top: 12px; height: 56px; border-radius: 10px; background: #374151; border: 1px solid #4b5563; display: flex; align-items: center; padding: 0 0 2px 16px; font-size: 18px; color: #fff; }
.wifi { width: 18px; height: 14px; margin-right: 15px; color: #22a35a; flex: none; }
.fr-note { margin-top: 10px; font-size: 18px; line-height: 27px; color: #9ca3af; }
.card-next { height: 100px; border-color: #c2410c; flex: none; }

/* ---------- taskbar ---------- */
.taskbar { height: 60px; display: flex; align-items: center; border-top: 1px solid #b8b8b8; color: #1a1a1a;
  background: linear-gradient(90deg, #dde1ee 0, #d6ddee 38%, #c8e6f0 45%, #c9eedd 54%, #b9e8e6 60%, #f2e6c2 66%, #f5e5bf 100%); }
.weather { width: 447px; display: flex; align-items: center; padding-left: 25px; flex: none; }
.w-ico { width: 32px; height: 26px; flex: none; }
.w-text { margin-left: 7px; padding-bottom: 2px; display: flex; flex-direction: column; font: 14.4px/20px "Noto Sans", sans-serif; }
.w-text small { font-size: 14.4px; color: #444; }
.winlogo { width: 29px; height: 29px; flex: none; }
.tsearch { width: 273px; height: 39px; margin-left: 18px; border-radius: 20px; flex: none; border: 1px solid #c5cad8; background: linear-gradient(90deg, #f6f7fb, #eef7f4); display: flex; align-items: center; padding-left: 15px; font: 18px/20px "Noto Sans", sans-serif; color: #555; }
.tsearch-i { width: 20px; height: 20px; margin-right: 9px; color: #1a1a1a; flex: none; }
.apps { display: flex; margin-left: 3px; flex: none; }
.app { position: relative; width: 55px; height: 59px; display: flex; align-items: center; justify-content: center; }
.ai { width: 30px; height: 30px; display: block; }
.ai-t { font: 700 11px "Liberation Sans", sans-serif; fill: #fff; text-anchor: middle; }
.ai-free { font: 700 5.5px "Liberation Sans", sans-serif; fill: #fff; }
.ai-tt { font: 700 13px "Liberation Sans", sans-serif; fill: #fff; text-anchor: middle; }
.ai-ij { font: 700 9px "Liberation Mono", monospace; fill: #fff; }
.app-run::after { content: ""; position: absolute; left: 50%; bottom: 4px; width: 8px; height: 3px; margin-left: -4px; border-radius: 2px; background: #8a8578; }
.app-active::before { content: ""; position: absolute; left: 6px; top: 5px; width: 46px; height: 48px; border-radius: 6px; background: rgba(255,255,255,.42); }
.app-active::after { content: ""; position: absolute; left: 50%; bottom: 4px; width: 20px; height: 4px; margin-left: -10px; border-radius: 2px; background: #0078d4; }
.app-active .ai { position: relative; }
.badge { position: absolute; left: 32px; top: 8px; width: 20px; height: 20px; border-radius: 50%; font: 12px/20px "Noto Sans", sans-serif; text-align: center; }
.badge-l { background: #84949c; color: #e6ecef; }
.badge-d { background: #0b95a8; color: #c4eef4; }
.tray { margin-left: auto; display: flex; align-items: center; padding-right: 24px; }
.tr { display: block; flex: none; }
.tr-chev { width: 15px; height: 10px; color: #222; }
.tr-cloud { width: 21px; height: 14px; margin-left: 22px; }
.tr-wifi { width: 20px; height: 16px; margin-left: 19px; color: #222; }
.tr-vol { width: 20px; height: 17px; margin-left: 11px; color: #222; }
.tr-bat { width: 20px; height: 14px; margin-left: 10px; color: #222; }
.clock { margin-left: 19px; display: flex; flex-direction: column; align-items: flex-end; font: 14.6px/20px "Noto Sans", sans-serif; color: #1a1a1a; }
```
